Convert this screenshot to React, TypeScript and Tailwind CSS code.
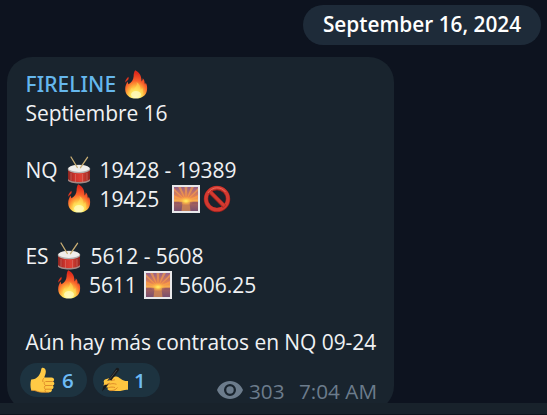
import React from 'react';

function Fire({ className = '' }: { className?: string }) {
  return (
    <svg viewBox="0 0 24 29" className={`h-[29px] w-6 shrink-0 ${className}`}>
      <defs>
        <radialGradient id="flame" cx="0.48" cy="0.94" r="0.85">
          <stop offset="0" stopColor="#fffed0" />
          <stop offset="0.25" stopColor="#fff06a" />
          <stop offset="0.45" stopColor="#ffb43c" />
          <stop offset="0.68" stopColor="#f9602a" />
          <stop offset="1" stopColor="#e02a1c" />
        </radialGradient>
      </defs>
      <path d="M11.2 .3C16 2.500 17.500 6.500 17.600 11.500C18.400 10.600 18.800 9.600 18.700 8.300C21 10.300 20.300 12.500 21 14.500C21.400 13.900 21.600 13.200 21.500 12.400C23 14.300 23.400 17.200 23 20C22.300 25.500 17.800 28.600 12 28.600C5.500 28.600 1.400 25 1.200 19.500C1 15.800 2.600 13.800 3.300 11.600L4.500 14.300C7.500 12.500 9.500 9.800 9.600 6.500C9.700 4 10 1.600 11.200 .3Z" fill="url(#flame)" />
      <path d="M2.800 8.500C3.200 7.400 4.200 7.200 4.300 6.700C5.100 8.300 4.500 9.600 3.400 10.500C2.500 11.200 1.900 12 1.500 12.800C1 11 1.800 9.700 2.800 8.500Z" fill="#dc3420" />
      <path d="M12.500 12C14 16 10 18 9.800 20.500C8.500 19.500 8.300 18.500 8.300 17.500C5.500 20 4.800 23.500 7.500 26C10 28.500 16 28 18 25.500C20.200 22.600 18.600 19.500 18.300 17.800L16.500 20.200C16.700 16.500 15.500 14 12.500 12Z" fill="#ffe15a" fillOpacity=".48" />
      <ellipse cx="12" cy="24.500" rx="5" ry="3.500" fill="#fffdd0" fillOpacity=".65" />
    </svg>
  );
}

function Drum({ className = '' }: { className?: string }) {
  return (
    <svg viewBox="0 0 24 29" className={`h-[29px] w-6 shrink-0 ${className}`}>
      <defs>
        <linearGradient id="drum">
          <stop offset="0" stopColor="#8d2621" />
          <stop offset=".3" stopColor="#cd332b" />
          <stop offset=".6" stopColor="#df4135" />
          <stop offset="1" stopColor="#92251f" />
        </linearGradient>
      </defs>
      <path d="M1 13.500V24C3 28 21 28 23 24V13.500Z" fill="url(#drum)" />
      <path d="M1 23V24.500C3 28.500 21 28.500 23 24.500V23C20 27 4 27 1 23Z" fill="#a58a86" />
      <path d="M4 17V24.500M8.500 18V26M15.500 18V26M20 17V24.500" stroke="#dc8278" strokeWidth=".5" />
      <ellipse cx="12" cy="13" rx="11.300" ry="4.300" fill="#b4b0af" />
      <ellipse cx="12" cy="12.400" rx="10.500" ry="3.500" fill="#f0eeeb" />
      <path d="M4 1L10.300 11.500M20.500 1.300L13.500 11.700" stroke="#c9ae74" strokeWidth="1.300" strokeLinecap="round" />
    </svg>
  );
}

function Sunrise({ className = '' }: { className?: string }) {
  return (
    <svg viewBox="0 0 28 28" className={`size-7 shrink-0 ${className}`}>
      <defs>
        <linearGradient id="sky" x2="0" y2="1">
          <stop offset="0" stopColor="#95608a" />
          <stop offset=".4" stopColor="#e48251" />
          <stop offset=".58" stopColor="#f9b04d" />
          <stop offset=".64" stopColor="#a9635c" />
          <stop offset="1" stopColor="#79506f" />
        </linearGradient>
        <radialGradient id="sun">
          <stop offset="0" stopColor="#fff06a" />
          <stop offset=".3" stopColor="#ffd04e" />
          <stop offset="1" stopColor="#ff9c40" stopOpacity="0" />
        </radialGradient>
      </defs>
      <path d="M0 0H28V28H0Z" fill="#e8e8ea" />
      <path d="M2 2H26V26H2Z" fill="url(#sky)" />
      <path d="M14 16L2 3V6ZM14 16L6 2H9ZM14 16L12.500 2H15.500ZM14 16L19 2H22ZM14 16L26 3V6ZM14 16L2 10V12.500ZM14 16L26 10V12.500Z" fill="#ffa343" fillOpacity=".6" />
      <path d="M10.500 18H17.500L18.500 26H9.500Z" fill="#dd904e" fillOpacity=".7" />
      <ellipse cx="14" cy="16" rx="8" ry="4.500" fill="url(#sun)" />
      <path d="M2 18H10M18 18H26" stroke="#885066" strokeWidth=".8" />
    </svg>
  );
}

function Prohibited({ className = '' }: { className?: string }) {
  return (
    <svg viewBox="0 0 28 28" className={`size-7 shrink-0 ${className}`}>
      <circle cx="14" cy="14" r="11" fill="none" stroke="#9d211d" strokeWidth="4.500" />
      <circle cx="14" cy="13.700" r="11" fill="none" stroke="#d33a31" strokeWidth="3.300" />
      <path d="M6.500 6.200L21.500 21.500" stroke="#a9251f" strokeWidth="4.200" />
      <path d="M6.500 6L21.500 21" stroke="#d43a30" strokeWidth="3" />
      <path d="M5 8C9 1.500 18 1 22.500 7" fill="none" stroke="#eb6e60" strokeWidth=".9" />
    </svg>
  );
}

function Thumb() {
  return (
    <svg viewBox="0 0 25 26" className="h-[26px] w-[25px] shrink-0">
      <path d="M1.200 12.500C4 12.500 6.500 11.500 8.500 9C10.300 6.700 10.700 5 11.300 2C11.700-.3 15.500.5 15.800 4C16 6.700 14.800 8.700 14.300 10.500H21.500C24.500 10.500 24.900 13.800 22.800 14.500C25 15.200 24.700 18.200 22.700 18.500C24.300 19.500 23.500 22 21.700 22.200C22.500 24 21 25.200 19 25.200H12C7.500 25.200 6 23 1.200 23.300C.2 20 .2 15.500 1.200 12.500Z" fill="#ffca45" />
      <path d="M14.300 10.700C12.800 12 12.400 13.500 13 15M22.800 14.500H16M22.500 18.500H15.800M21.700 22.200H15.500M15.500 14.500C13.500 15 14 18 15.800 18.500C13.800 19 14 21.800 15.500 22.200C14.600 23.500 15 24.500 16 25" fill="none" stroke="#db8427" strokeWidth=".9" />
      <path d="M1.200 23.300C6 23 7.500 25.200 12 25.200H19" stroke="#e8952d" strokeWidth=".8" fill="none" />
    </svg>
  );
}

function WritingHand() {
  return (
    <svg viewBox="0 0 28 26" className="h-[26px] w-7 shrink-0">
      <path d="M3.500 16.200C2 15.200 2.500 13.200 4.500 12.300L13.500 9.800C16 9 17.500 10 18.500 11L21.500 13C23.500 14 25 14 27 14V22.700C23 22.200 20.500 24.500 15 24L8.500 23.500C6.300 23 5.800 21.500 7.300 20.700L4.300 20C2.300 19 2.200 17.500 3.500 16.200Z" fill="#ffc640" />
      <path d="M8.500 17.300C11 16.300 13 16.500 15.500 17.300M7.300 20.700C10 19.800 12 20 14 20.500M8.500 23.500C11 24 15 23 16.500 20.500M10 13.500L14 12.800" fill="none" stroke="#dc8727" strokeWidth=".9" />
      <path d="M1 24.500L2.300 19.700L14.800 1.700C16 -.1 18.800 1.200 18 3.300L5 20.500Z" fill="#191a1c" />
      <path d="M6 15.500L15.800 3" stroke="#53565a" strokeWidth=".7" />
      <path d="M4 14.700L8.500 13.300C11 13 11 15.300 9 16L5 17.700C3 18.200 2.300 15.500 4 14.700Z" fill="#ffc640" />
      <path d="M5 17.700L9 16" stroke="#dc8727" strokeWidth=".8" />
    </svg>
  );
}

function Eye() {
  return (
    <svg viewBox="0 0 26 18" className="h-[18px] w-[26px] shrink-0">
      <path fillRule="evenodd" d="M13 0C19 0 23.700 3.500 26 9C23.700 14.500 19 18 13 18S2.300 14.500 0 9C2.300 3.500 7 0 13 0ZM13 3A6 6 0 1 0 13 15A6 6 0 1 0 13 3ZM13 5.300A3.700 3.700 0 1 1 13 12.700A3.700 3.700 0 1 1 13 5.300Z" fill="#6c7c8c" />
    </svg>
  );
}

const row = 'flex h-[28.65px] items-center whitespace-pre';

export default function App() {
  return (
    <main className="flex h-[415px] w-[547px] flex-col overflow-hidden bg-[#0d131f] font-['Open_Sans','Noto_Sans',sans-serif] text-[21px] leading-[28px] text-[#f0f2f4]">
      <div className="flex h-[403px] shrink-0 flex-col overflow-hidden">
        <header className="mt-[5px] mr-[6px] flex h-10 w-[238px] shrink-0 items-center justify-center self-end rounded-full bg-[#1e2b39] pb-[2px] text-[20.8px] font-semibold text-white">
          <time>September 16, 2024</time>
        </header>
        <article className="mt-3 ml-[7px] flex h-[354px] w-[387px] shrink-0 flex-col rounded-[25px] bg-[#19242e] pt-[13px]">
          <div className="ml-[18.5px] flex flex-col tracking-[-0.07px]">
            <div className={row}>
              <span className="w-[98.5px] font-['Noto_Sans','Open_Sans',sans-serif] pb-px text-[21px] font-medium tracking-[0.08px] text-[#65b7ed]">FIRELINE</span>
              <Fire />
            </div>
            <div className={row}>Septiembre 16</div>
            <div className={row} />
            <div className={row}>
              <span className="w-[41px]">NQ</span>
              <Drum />
              <span className="ml-[9px]">19428 - 19389</span>
            </div>
            <div className={row}>
              <Fire className="ml-[41px]" />
              <span className="ml-[9px] w-[72.5px]">19425</span>
              <Sunrise />
              <Prohibited className="ml-[3px]" />
            </div>
            <div className={row} />
            <div className={row}>
              <span className="w-[31px]">ES</span>
              <Drum />
              <span className="ml-[10px]">5612 - 5608</span>
            </div>
            <div className={row}>
              <Fire className="ml-[31px]" />
              <span className="ml-[8.5px] w-[55px]">5611</span>
              <Sunrise />
              <span className="ml-[7px]">5606.25</span>
            </div>
            <div className={row} />
            <div className={row}>Aún hay más contratos en NQ 09-24</div>
          </div>
          <footer className="ml-[13px] mt-[7px] flex h-[34px] items-center text-[20.5px]">
            <button className="flex h-[34px] w-[67px] items-center rounded-full bg-[#1d3340] pl-[10px] font-semibold text-[#6dbbf5]">
              <Thumb />
              <span className="ml-[7px]">6</span>
            </button>
            <button className="ml-[6px] flex h-[34px] w-[67px] items-center rounded-full bg-[#1d3340] pl-2 font-semibold text-[#6dbbf5]">
              <WritingHand />
              <span className="ml-[5px]">1</span>
            </button>
            <div className="ml-[57px] flex items-center pt-[19px] text-[20.7px] leading-[20px] text-[#6c7c8c]">
              <Eye />
              <span className="ml-[6px] w-[50px] pt-[2px]">303</span>
              <time className="whitespace-nowrap pt-[2px]">7:04 AM</time>
            </div>
          </footer>
        </article>
      </div>
      <div className="h-3 shrink-0 border-b border-[#0d131c] bg-[#18222b]" />
    </main>
  );
}
